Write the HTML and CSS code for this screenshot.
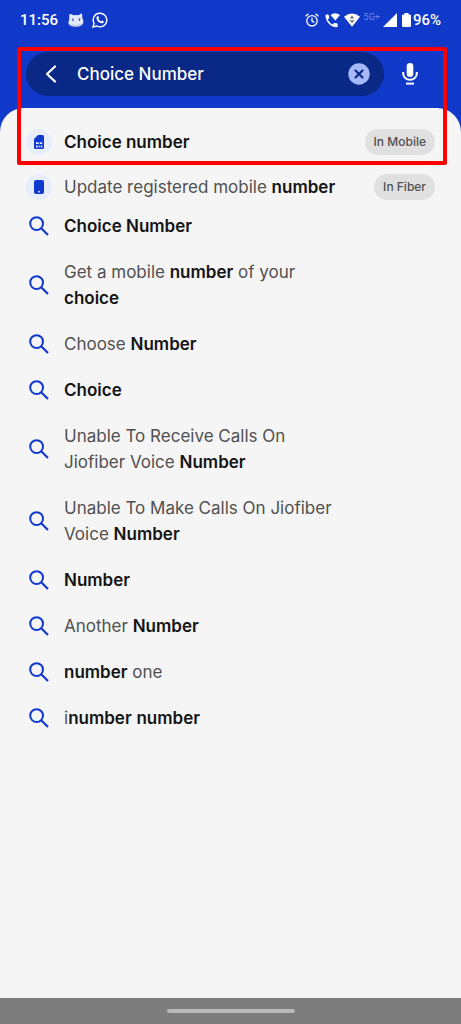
FILE: index.html
```html
<!DOCTYPE html>
<html lang="en">
<head>
<meta charset="utf-8">
<meta name="viewport" content="width=device-width, initial-scale=1">
<title>Search</title>
<link rel="stylesheet" href="styles.css">
</head>
<body>
<svg class="defs" aria-hidden="true">
  <symbol id="search" viewBox="0 0 20 20"><circle cx="7.6" cy="7.6" r="6.4" fill="none" stroke="currentColor" stroke-width="2"/><path d="M12.2 12.2l6.8 6.8" fill="none" stroke="currentColor" stroke-width="2.2"/></symbol>
</svg>
<div class="screen">
  <div class="status">
    <span class="clock">11:56</span>
    <svg class="cat" width="16" height="14" viewBox="0 0 16 14"><path d="M1.500 1Q3 .5 5.300 2.300Q8 1.700 10.700 2.200Q12.800 0 14 .5Q14.400 3 14.300 5Q16 8 15 10.500Q13 13.700 8 13.700T1 11.500Q-.3 9 1.300 7Q1 3 1.500 1z" fill="#e4eafb"/><ellipse cx="5" cy="6.800" rx=".8" ry="1.500" fill="#3f5cc8"/><ellipse cx="11.500" cy="6.500" rx=".8" ry="1.500" fill="#3f5cc8"/><path d="M1.500 11.500Q8 14 14.500 11" fill="none" stroke="#b5c1ef"/></svg>
    <svg width="16" height="16" viewBox="0 0 16 16"><path d="M1 15l1-3.800A6.800 6.800 0 1 1 4.800 14z" fill="none" stroke="#fff" stroke-width="1.400"/><path d="M5.400 4.200c.7-.5 1-.2 1.700 1.500l-.7 1.100c.6 1.200 1.500 2 2.800 2.600l1-1c1.500.6 1.800.8 1.600 1.500-.5 1.500-2.200 1.600-3.900.8C6.100 9.800 4.800 8.100 4.500 6.700c-.2-1 .2-2 .9-2.500z" fill="#fff"/></svg>
    <div class="status-right">
      <svg width="14" height="14" viewBox="0 0 14 14" fill="none" stroke="#fff" stroke-width="1.300"><circle cx="7" cy="7.800" r="5.200"/><path d="M7 4.800v3.300l2.200 1.300M.6 3.200L3.500.8M13.400 3.200L10.500.8"/></svg>
      <svg class="call" width="15" height="15" viewBox="0 0 15 15" fill="#fff"><path d="M.5 2.500Q.5 1.500 1.500 1.500H3Q3.800 1.500 4 3l.3 2-1.600 1.500Q4.500 10 7.500 11.500l1.700-1.600 2.500.4q1 .2 1 1V13q0 1.200-1.200 1.200C5.500 14 .5 8.500.5 2.500z"/><path d="M5.500 2Q10-1.500 15 2L10.300 7.500z"/></svg>
      <svg class="wifi" width="16" height="14" viewBox="0 0 16 14"><path d="M0 3.700Q8-2.700 16 3.700L8 13.700z" fill="#fff"/><path d="M8 2.500l2.500 3h-5zM8 10.300l2.500-3h-5z" fill="#777"/></svg>
      <span class="network">5G+</span>
      <svg class="signal" width="14" height="14" viewBox="0 0 14 14"><path d="M14 0v14H0z" fill="#fff"/></svg>
      <svg class="battery" width="9" height="14" viewBox="0 0 9 14"><path d="M2.500 0h4v1.500h1.300Q9 1.500 9 2.700v10Q9 14 7.800 14H1.200Q0 14 0 12.700v-10Q0 1.500 1.200 1.500h1.300z" fill="#fff"/></svg>
      <span class="percent">96%</span>
    </div>
  </div>

  <header class="header">
    <form class="field" role="search">
      <button class="icon-button" type="button" aria-label="Back"><svg width="12" height="18" viewBox="0 0 12 18"><path d="M10 1.500L2 9l8 7.500" fill="none" stroke="#fff" stroke-width="2.200" stroke-linecap="round" stroke-linejoin="round"/></svg></button>
      <input class="query" type="text" aria-label="Search" value="Choice Number">
      <button class="icon-button" type="button" aria-label="Clear"><svg width="22" height="22" viewBox="0 0 22 22"><circle cx="11" cy="11" r="10.700" fill="#a5b9f8"/><path d="M7.500 7.500l7 7M14.500 7.500l-7 7" stroke="#0a2885" stroke-width="2.200" stroke-linecap="round"/></svg></button>
    </form>
    <button class="icon-button" type="button" aria-label="Voice search"><svg width="16" height="22" viewBox="0 0 16 22"><rect x="4.700" y="0" width="6.600" height="14" rx="3.300" fill="#fff"/><path d="M1.200 9v1.500a6.800 6.300 0 0 0 13.600 0V9" fill="none" stroke="#fff" stroke-width="2"/><path d="M4 20.600h8" stroke="#fff" stroke-width="2"/></svg></button>
  </header>

  <main class="sheet">
    <ul class="list services">
      <li><a class="row" href="#"><span class="badge"><svg width="10" height="14" viewBox="0 0 10 14"><path d="M4 0h4.500Q10 0 10 1.500v11q0 1.500-1.500 1.500h-7Q0 14 0 12.500V4z" fill="#1039d0"/><path d="M2 7.200h2.600v1.900H2zM5.700 7.200h2.500v1.900H5.700zM2 10.600h1.700v1.800H2zM4.700 10.600h1v1.800h-1zM6.700 10.600h1.500v1.800H6.700z" fill="#e8edfb"/></svg></span><span class="label"><b>Choice number</b></span><span class="tag">In Mobile</span></a></li>
      <li><a class="row" href="#"><span class="badge"><svg width="10" height="14" viewBox="0 0 10 14"><rect width="10" height="14" rx="2" fill="#1039d0"/><circle cx="5" cy="11.700" r=".9" fill="#e8edfb"/></svg></span><span class="label">Update registered mobile <b>number</b></span><span class="tag">In Fiber</span></a></li>
    </ul>
    <ul class="list suggestions">
      <li><a class="row" href="#"><svg class="glass"><use href="#search"/></svg><span class="label"><b>Choice Number</b></span></a></li>
      <li><a class="row" href="#"><svg class="glass"><use href="#search"/></svg><span class="label">Get a mobile <b>number</b> of your <b>choice</b></span></a></li>
      <li><a class="row" href="#"><svg class="glass"><use href="#search"/></svg><span class="label">Choose <b>Number</b></span></a></li>
      <li><a class="row" href="#"><svg class="glass"><use href="#search"/></svg><span class="label"><b>Choice</b></span></a></li>
      <li><a class="row" href="#"><svg class="glass"><use href="#search"/></svg><span class="label">Unable To Receive Calls On Jiofiber Voice <b>Number</b></span></a></li>
      <li><a class="row" href="#"><svg class="glass"><use href="#search"/></svg><span class="label">Unable To Make Calls On Jiofiber Voice <b>Number</b></span></a></li>
      <li><a class="row" href="#"><svg class="glass"><use href="#search"/></svg><span class="label"><b>Number</b></span></a></li>
      <li><a class="row" href="#"><svg class="glass"><use href="#search"/></svg><span class="label">Another <b>Number</b></span></a></li>
      <li><a class="row" href="#"><svg class="glass"><use href="#search"/></svg><span class="label"><b>number</b> one</span></a></li>
      <li><a class="row" href="#"><svg class="glass"><use href="#search"/></svg><span class="label">i<b>number</b> <b>number</b></span></a></li>
    </ul>
  </main>
  <div class="navbar"><span class="handle"></span></div>
  <div class="highlight"></div>
</div>
</body>
</html>
```

FILE: styles.css
```css
* { box-sizing: border-box; }
body { margin: 0; font-family: Inter, "Liberation Sans", sans-serif; }
.defs { display: none; }
svg { display: block; flex: none; }
.screen {
  position: relative;
  display: flex;
  flex-direction: column;
  min-height: 100vh;
  background: #1039c9;
}
.status {
  display: flex;
  align-items: center;
  gap: 8px;
  height: 40px;
  padding: 0 20px;
  color: #fff;
  font-family: Roboto, sans-serif;
  font-size: 15px;
  font-weight: 500;
}
.cat { margin-left: 2px; }
.status-right { display: flex; align-items: center; margin-left: auto; }
.call { margin-left: 6px; }
.wifi { margin-left: 4px; }
.network { margin: 0 3px 6px 4px; font-size: 9px; font-weight: 400; color: #6f88df; }
.signal { margin-right: 5px; }
.percent { margin-left: 2px; }
.header {
  display: flex;
  align-items: center;
  gap: 13px;
  padding: 12px 38px 12px 26px;
}
.field {
  display: flex;
  flex: 1;
  align-items: center;
  min-width: 0;
  height: 44px;
  padding: 0 12px;
  border-radius: 22px;
  background: #0a2885;
}
.icon-button {
  display: grid;
  place-items: center;
  flex: none;
  width: 26px;
  height: 32px;
  padding: 0;
  border: 0;
  background: none;
}
.query {
  flex: 1;
  min-width: 0;
  padding: 0 13px;
  border: 0;
  outline: 0;
  background: none;
  color: #fff;
  font: 500 17px/26px Inter, "Liberation Sans", sans-serif;
}
.sheet {
  flex: 1;
  padding: 18px 26px;
  border-radius: 24px 24px 0 0;
  background: #f5f5f5;
}
.list { margin: 0; padding: 0; list-style: none; }
.services { display: grid; gap: 13px; }
.row {
  display: flex;
  align-items: center;
  color: #505050;
  font-size: 17px;
  line-height: 26px;
  text-decoration: none;
}
.services .row { min-height: 32px; }
.suggestions .row { padding: 10px 100px 10px 0; }
.badge {
  display: grid;
  place-items: center;
  flex: none;
  width: 26px;
  height: 26px;
  margin-right: 12px;
  border-radius: 50%;
  background: #e8edfb;
}
.glass {
  width: 20px;
  height: 20px;
  margin: 0 15px 0 3px;
  color: #1039d0;
}
.label { font-weight: 400; }
.label b { color: #141414; font-weight: 600; }
.tag {
  margin-left: auto;
  padding: 0 9px;
  border-radius: 13px;
  background: #e0e0e0;
  color: #505050;
  font-size: 12px;
  font-weight: 500;
}
.navbar {
  display: grid;
  place-items: center;
  height: 26px;
  background: #7d7d7d;
}
.handle { width: 128px; height: 4px; border-radius: 2px; background: #b9b9b9; }
.highlight {
  position: absolute;
  top: 47px;
  left: 17px;
  right: 14px;
  height: 118px;
  border: 4px solid #f00;
  border-radius: 2px;
  pointer-events: none;
}
```
